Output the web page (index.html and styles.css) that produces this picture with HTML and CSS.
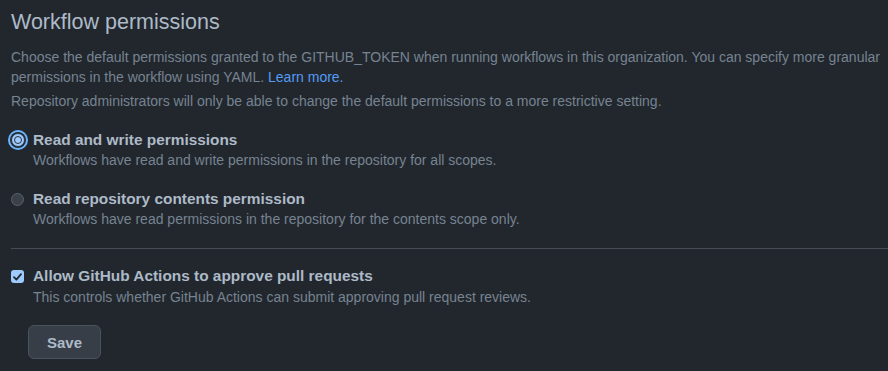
FILE: index.html
```html
<!DOCTYPE html>
<html lang="en">

<head>
    <meta charset="UTF-8">
    <meta name="viewport" content="width=device-width, initial-scale=1.0">
    <title>Workflow permissions</title>
    <link rel="stylesheet" href="styles.css">
</head>

<body>
    <div class="settings">
        <h2 class="title">Workflow permissions</h2>
        <p class="lead">Choose the default permissions granted to the GITHUB_TOKEN when running workflows in this organization. You can specify more granular permissions in the workflow using YAML. <a href="#">Learn more.</a></p>
        <p class="note">Repository administrators will only be able to change the default permissions to a more restrictive setting.</p>

        <div class="option first">
            <span class="radio checked"><span class="dot"></span></span>
            <div class="option-text">
                <div class="label">Read and write permissions</div>
                <div class="desc">Workflows have read and write permissions in the repository for all scopes.</div>
            </div>
        </div>
        <div class="option">
            <span class="radio"></span>
            <div class="option-text">
                <div class="label">Read repository contents permission</div>
                <div class="desc">Workflows have read permissions in the repository for the contents scope only.</div>
            </div>
        </div>

        <hr class="divider">

        <div class="option check-option">
            <span class="checkbox">
                <svg width="9" height="8" viewBox="0 0 9 8"><path d="M1 4.2 L3.4 6.6 L8 1.2" fill="none" stroke="#22272e" stroke-width="1.8" stroke-linecap="round" stroke-linejoin="round"/></svg>
            </span>
            <div class="option-text">
                <div class="label">Allow GitHub Actions to approve pull requests</div>
                <div class="desc">This controls whether GitHub Actions can submit approving pull request reviews.</div>
            </div>
        </div>

        <button class="save">Save</button>
    </div>
</body>
</html>
```

FILE: styles.css
```css
* {
    margin: 0;
    padding: 0;
    box-sizing: border-box;
}

body {
    background: #22272e;
    color: #adbac7;
    font-family: "Liberation Sans", Arial, sans-serif;
}

.settings {
    padding: 7px 0 0 11px;
}

.title {
    font-size: 21.5px;
    font-weight: 400;
    line-height: 30px;
}

.lead,
.note {
    font-size: 14px;
    line-height: 20px;
    color: #768390;
}

.lead {
    margin-top: 10px;
    padding-right: 4px;
}

.lead a {
    color: #539bf5;
    text-decoration: none;
}

.note {
    margin-top: 4px;
}

.option {
    display: flex;
    gap: 9px;
    margin-top: 19px;
}

.option-text .label {
    font-size: 15.4px;
    font-weight: 700;
    line-height: 20px;
    color: #adbac7;
}

.option-text .desc {
    font-size: 14px;
    line-height: 20px;
    color: #768390;
}

.radio {
    width: 13px;
    height: 13px;
    margin-top: 4px;
    border-radius: 50%;
    background: #3b4149;
    border: 1px solid #5b636c;
    flex-shrink: 0;
}

.radio.checked {
    width: 14px;
    height: 14px;
    margin-top: 3px;
    margin-right: -1px;
    background: #9ecbff;
    border: 1px solid #2d333b;
    box-shadow: 0 0 0 1px #22272e, 0 0 0 3px #6cb6ff;
    display: flex;
    align-items: center;
    justify-content: center;
}

.radio .dot {
    width: 8px;
    height: 8px;
    border-radius: 50%;
    background: #9ecbff;
    border: 1px solid #2d333b;
}

.divider {
    border: 0;
    border-top: 1px solid #444c56;
    margin-top: 19px;
}

.check-option {
    margin-top: 17px;
}

.check-option .desc {
    margin-top: 1px;
}

.checkbox {
    width: 13px;
    height: 13px;
    margin-top: 4px;
    border-radius: 3px;
    background: #9ecbff;
    display: flex;
    align-items: center;
    justify-content: center;
    flex-shrink: 0;
}

.save {
    margin: 18px 0 0 17px;
    width: 73px;
    height: 34px;
    background: #373e47;
    border: 1px solid #4a525c;
    border-radius: 6px;
    color: #adbac7;
    font-family: "Liberation Sans", Arial, sans-serif;
    font-size: 15px;
    font-weight: 700;
    cursor: pointer;
}
```
